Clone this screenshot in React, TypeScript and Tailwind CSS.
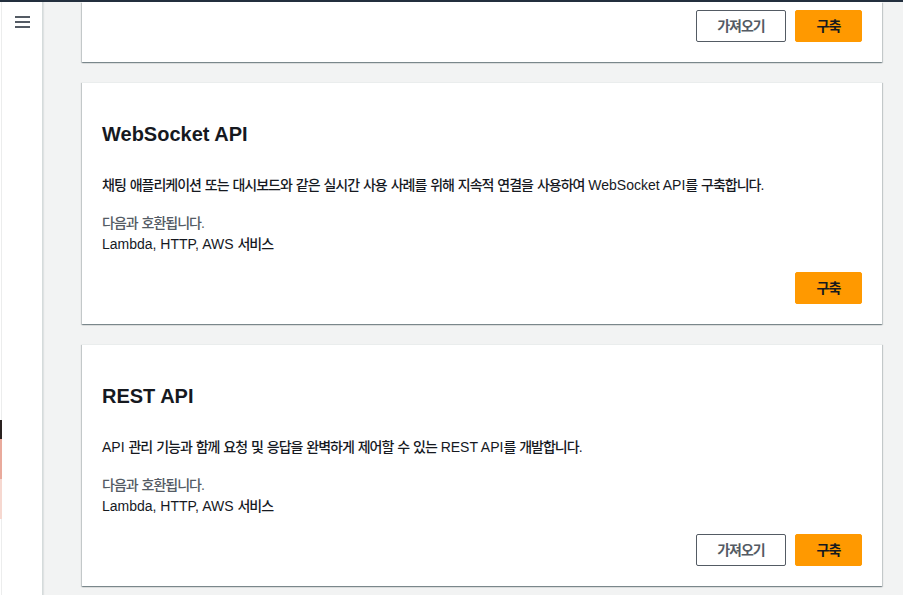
import React from "react";

const K = ({ t, medium = false }: { t: string; medium?: boolean }) => {
  const parts = t.split(/([\uAC00-\uD7A3]+)/);
  return (
    <>
      {parts.map((p, i) =>
        /[\uAC00-\uD7A3]/.test(p) ? (
          <span key={i} className={medium ? "tracking-[-1px] font-medium" : "tracking-[-1px]"}>
            {p}
          </span>
        ) : (
          <React.Fragment key={i}>{p}</React.Fragment>
        )
      )}
    </>
  );
};

const Buttons = ({ showImport }: { showImport: boolean }) => (
  <div className="flex justify-end gap-[9px]">
    {showImport && (
      <button className="w-[90px] h-[32px] border border-[#545b64] rounded-[2px] bg-white text-[#545b64] font-bold text-[14px] flex items-center justify-center">
        <K t="가져오기" />
      </button>
    )}
    <button className="w-[67px] h-[32px] border border-[#ff9900] rounded-[2px] bg-[#ff9900] text-[#16191f] font-bold text-[14px] flex items-center justify-center">
      <K t="구축" />
    </button>
  </div>
);

const cardShadow =
  "shadow-[0_1px_1px_0_rgba(0,28,36,0.3),1px_1px_1px_0_rgba(0,28,36,0.15),-1px_1px_1px_0_rgba(0,28,36,0.15)]";

const Card = ({
  title,
  desc,
  showImport,
}: {
  title: string;
  desc: string;
  showImport: boolean;
}) => (
  <div
    className={`bg-white border-t border-[#eaeded] pt-[39px] px-[20px] pb-[20px] ${cardShadow}`}
  >
    <h2 className="text-[20px] leading-[24px] font-bold text-[#16191f]">{title}</h2>
    <p className="mt-[28px] text-[14px] leading-[22px] text-[#16191f]">
      <K t={desc} medium />
    </p>
    <div className="mt-[17px] text-[14px] leading-[21px]">
      <div className="text-[#545b64]">
        <K t="다음과 호환됩니다." medium />
      </div>
      <div className="text-[#16191f]">
        <K t="Lambda, HTTP, AWS 서비스" medium />
      </div>
    </div>
    <div className="mt-[17px]">
      <Buttons showImport={showImport} />
    </div>
  </div>
);

export default function App() {
  return (
    <div className="w-[903px] h-[595px] overflow-hidden flex flex-col bg-[#f2f3f3] font-['Liberation_Sans','Noto_Sans_CJK_KR',sans-serif] relative">
      <div className="h-[2px] bg-[#232f3e] shrink-0" />
      <div className="flex flex-1 min-h-0">
        <aside className="w-[43px] shrink-0 bg-white border-r border-[#d5dbdb] shadow-[1px_0_1px_0_rgba(0,28,36,0.08)] relative">
          <div className="absolute left-[1px] top-0 bottom-0 w-px bg-[#eceded]" />
          <div className="pt-[14px] pl-[15px] flex flex-col gap-[3.7px]">
            <span className="block w-[15px] h-[1.5px] bg-[#545b64]" />
            <span className="block w-[15px] h-[1.5px] bg-[#545b64]" />
            <span className="block w-[15px] h-[1.5px] bg-[#545b64]" />
          </div>
          <div className="absolute left-0 top-[418px] w-[2px] flex flex-col">
            <div className="h-[19px] bg-[#2a2220]" />
            <div className="h-[40px] bg-[#e9aa9c]" />
            <div className="h-[40px] bg-[#f6d8d0]" />
          </div>
        </aside>
        <main className="flex-1 pl-[39px] pr-[21px] flex flex-col gap-[20px]">
          <div className={`bg-white pt-[8px] pb-[20px] px-[20px] ${cardShadow}`}>
            <Buttons showImport={true} />
          </div>
          <Card
            title="WebSocket API"
            desc="채팅 애플리케이션 또는 대시보드와 같은 실시간 사용 사례를 위해 지속적 연결을 사용하여 WebSocket API를 구축합니다."
            showImport={false}
          />
          <Card
            title="REST API"
            desc="API 관리 기능과 함께 요청 및 응답을 완벽하게 제어할 수 있는 REST API를 개발합니다."
            showImport={true}
          />
        </main>
      </div>
    </div>
  );
}
